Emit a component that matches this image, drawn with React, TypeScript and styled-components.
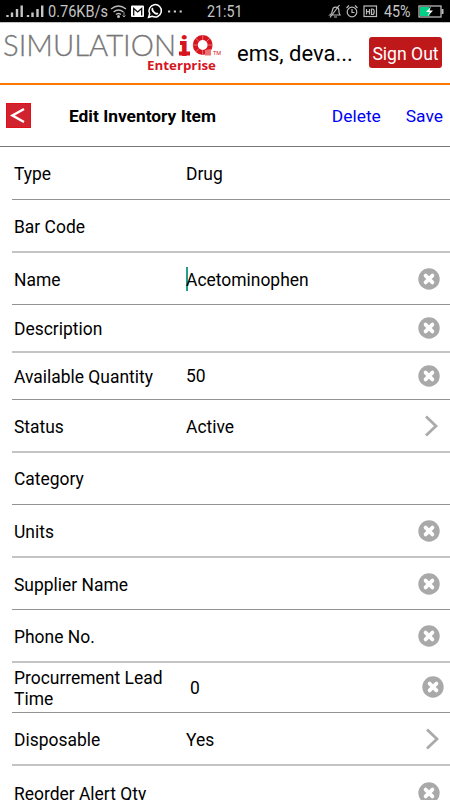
import React from "react";
import styled, { createGlobalStyle } from "styled-components";

const Global = createGlobalStyle`
  * { box-sizing: border-box; }
  html, body { margin: 0; padding: 0; background: #fff; overflow: hidden; }
  body { font-family: Roboto, sans-serif; color: #000; }
`;

const Screen = styled.main`
  width: 450px;
  height: 800px;
  overflow: hidden;
  background: #fff;
`;

const StatusBar = styled.div`
  height: 22px;
  background: #000;
`;

const StatusArt = styled.svg`
  display: block;
  font-family: Roboto, sans-serif;
`;

const BrandBar = styled.header`
  display: flex;
  align-items: center;
  height: 63px;
  padding-right: 8px;
  border-top: 1px solid #c4c4c4;
  border-bottom: 2px solid #ff7800;
`;

const Logo = styled.svg`
  flex: none;
  display: block;
`;

const UserName = styled.div`
  flex: 1;
  margin: 2px 0 0 7px;
  font-size: 22px;
  line-height: 26px;
  white-space: nowrap;
`;

const SignOut = styled.button`
  width: 73px;
  height: 31px;
  margin-bottom: 1px;
  padding: 3px 0 0;
  border: 0;
  border-radius: 3px;
  background: #bf181b;
  color: #fff;
  font: 17.6px/28px Roboto, sans-serif;
  white-space: nowrap;
`;

const TitleBar = styled.div`
  display: flex;
  align-items: center;
  height: 62px;
  padding: 0 7px 0 6px;
  border-bottom: 1px solid #777;
`;

const Back = styled.button`
  display: block;
  width: 25px;
  height: 25px;
  padding: 0;
  border: 1px solid #e11119;
  background: #d0232f;
`;

const Title = styled.h1`
  flex: 1;
  margin: 0 0 0 38px;
  font-size: 17.35px;
  font-weight: 700;
  white-space: nowrap;
`;

const Action = styled.a`
  margin-left: 25px;
  padding-top: 1px;
  color: #0000f5;
  font-size: 17.4px;
`;

const Row = styled.div<{ $height: number; $soft?: boolean; $drop?: number }>`
  display: grid;
  grid-template-columns: 172px 1fr auto;
  align-items: center;
  height: ${(p) => p.$height}px;
  margin-left: 12px;
  padding: ${(p) => p.$drop ?? 2}px 0 0 2px;
  border-bottom: ${(p) => (p.$soft ? "2px solid #c4c4c4" : "1px solid #939393")};
  font-size: 17.45px;
  line-height: 20.5px;
`;

const Label = styled.span`
  padding-top: 1px;
`;

const Value = styled.span<{ $shift?: number }>`
  display: flex;
  align-items: center;
  padding: 1px 0 0 ${(p) => p.$shift ?? 0}px;
`;

const Caret = styled.i`
  width: 2px;
  height: 24px;
  margin: -2px -2px 0 0;
  background: #269e8c;
`;

const Mark = styled.svg<{ $right: number }>`
  display: block;
  margin: -2px ${(p) => p.$right}px 0 0;
`;

function ClearIcon({ right = 10 }: { right?: number }) {
  return (
    <Mark $right={right} width="22" height="22" viewBox="0 0 22 22">
      <circle cx="11" cy="11" r="10.7" fill="#a9a9a9" />
      <path d="M7.6 7.6l6.8 6.8M14.4 7.6l-6.800 6.800" stroke="#fff" strokeWidth="3.8" strokeLinecap="round" />
    </Mark>
  );
}

function ChevronIcon({ right }: { right: number }) {
  return (
    <Mark $right={right} width="14" height="22" viewBox="0 0 14 22" fill="none">
      <path d="M2 1.5l10 9.5L2 20.5" stroke="#aaa" strokeWidth="2.8" />
    </Mark>
  );
}

type Item = {
  label: string;
  value?: string;
  height: number;
  soft?: boolean;
  drop?: number;
  mark?: "clear" | "chevron";
  right?: number;
  caret?: boolean;
  shift?: number;
};

const items: Item[] = [
  { label: "Type", value: "Drug", height: 53 },
  { label: "Bar Code", height: 53, soft: true, drop: 2 },
  { label: "Name", value: "Acetominophen", height: 52, mark: "clear", caret: true, drop: 2 },
  { label: "Description", height: 48, soft: true, mark: "clear", drop: 2 },
  { label: "Available Quantity", value: "50", height: 47, mark: "clear", shift: -1, drop: 1 },
  { label: "Status", value: "Active", height: 53, soft: true, mark: "chevron", right: 12, drop: 2 },
  { label: "Category", height: 52, drop: 1 },
  { label: "Units", height: 53, soft: true, mark: "clear", drop: 2 },
  { label: "Supplier Name", height: 52, mark: "clear", drop: 2 },
  { label: "Phone No.", height: 53, soft: true, mark: "clear", drop: 2 },
  { label: "Procurrement Lead Time", value: "0", height: 50, mark: "clear", right: 6, shift: 4, drop: 1 },
  { label: "Disposable", value: "Yes", height: 53, soft: true, mark: "chevron", right: 11, drop: 2 },
  { label: "Reorder Alert Qty", height: 53, mark: "clear", drop: 3 },
];

function StatusGraphics() {
  return (
    <StatusArt width="450" height="22" viewBox="0 0 450 22" fill="none">
      {[7.5, 28].map((x) => (
        <path
          key={x}
          d={`M${x} 17v-2M${x + 4.5} 17v-4.500M${x + 9.5} 17v-8M${x + 14.2} 17V5.500`}
          stroke="#c5c5c5"
          strokeWidth="2.4"
        />
      ))}
      <text x="48" y="17" fill="#c5c5c5" fontSize="16" textLength="60" lengthAdjust="spacingAndGlyphs">0.76KB/s</text>
      <g stroke="#bbb" strokeWidth="1.4">
        <path d="M111 9q7.500-6 15 0M113.500 12q5-4 10 0M116 14.500q2.500-2 5 0" />
        <circle cx="118.500" cy="16.500" r=".8" fill="#bbb" />
        <path d="M124 12v5M122.500 15.500l1.500 1.500 1.500-1.500" strokeWidth=".8" />
      </g>
      <rect x="131" y="5.500" width="13" height="11.500" rx="1" fill="#fff" />
      <path d="M133.700 15.500V8.500l4 3.500 4-3.500v7" stroke="#111" strokeWidth="1.300" />
      <path d="M148.600 17.300l1.100-3.600a6.200 6.200 0 1 1 2.400 2.500z" stroke="#fff" strokeWidth="1.500" />
      <path d="M152.800 8.200c-1 1-.5 2.500 1 4s3 2 4 1" stroke="#fff" strokeWidth="1.800" />
      <path d="M168 11.500h2.200M173.800 11.500h2.200M179.600 11.500h2.200" stroke="#ccc" strokeWidth="2" />
      <text x="207" y="17" fill="#c5c5c5" fontSize="16" textLength="35.500" lengthAdjust="spacingAndGlyphs">21:51</text>
      <g stroke="#bbb" strokeWidth="1.2">
        <path d="M330 15h10c-1-1.500-1.200-3-1.200-5 0-3.500-5.800-4-6.300 0-.2 2-.3 3.500-2.500 5zM334 17h3M330 17.500L339.500 5" />
        <circle cx="352" cy="12" r="4.800" />
        <path d="M352 9v3.500h2.500M346.500 8l2.500-2.500M355 5.500L357.500 8" />
        <rect x="364" y="6" width="12.500" height="10.500" />
        <path d="M366.500 9v5.500M369.500 9v5.500M366.500 11.700h3M371.500 9v5.500h1c2.200 0 2.200-5.500 0-5.500z" />
      </g>
      <text x="384" y="17" fill="#c5c5c5" fontSize="16" textLength="26.500" lengthAdjust="spacingAndGlyphs">45%</text>
      <rect x="419" y="6" width="22" height="11" stroke="#b9b9b9" strokeWidth="1.300" />
      <rect x="420" y="7" width="9.500" height="9" fill="#00cf88" />
      <path d="M442.500 9v5" stroke="#b9b9b9" strokeWidth="2" />
      <path d="M431 6.500l-5 5.500h3.500l-2 4.500 5.500-6h-3.500z" fill="#fff" />
    </StatusArt>
  );
}

function BrandLogo() {
  return (
    <Logo width="230" height="60" viewBox="0 23 230 60" fill="none">
      <text x="3" y="55.500" fill="#777" stroke="#777" strokeWidth=".3" fontFamily="Lato, sans-serif" fontWeight="300" fontSize="28.800" textLength="173" lengthAdjust="spacingAndGlyphs">SIMULATION</text>
      <text x="180.500" y="55.500" fill="#d6151e" fontFamily="Roboto, sans-serif" fontWeight="900" fontSize="27.500">i</text>
      <path d="M180 43h5M179 53.500h11" stroke="#d6151e" strokeWidth="4" />
      <circle cx="202.700" cy="45" r="7.400" stroke="#d6151e" strokeWidth="5" />
      <path d="M202.700 35v5M192.700 45h5M207.700 45h5M202.700 50v5M195.500 38l3.500 3.500M210 38l-3.500 3.500M195.500 52l3.500-3.500" stroke="#fff" strokeWidth=".4" />
      <path d="M205 50l6-1v6.500h-6z" fill="#ea7277" />
      <text x="213" y="55" fill="#d6151e" fontFamily="Roboto, sans-serif" fontSize="5.500">TM</text>
      <text x="147" y="70" fill="#d6151e" fontFamily="Open Sans, sans-serif" fontWeight="700" fontSize="13" textLength="69" lengthAdjust="spacingAndGlyphs">Enterprise</text>
    </Logo>
  );
}

export default function App() {
  return (
    <Screen>
      <Global />
      <StatusBar><StatusGraphics /></StatusBar>
      <BrandBar>
        <BrandLogo />
        <UserName>ems, deva...</UserName>
        <SignOut>Sign Out</SignOut>
      </BrandBar>
      <TitleBar>
        <Back aria-label="Back">
          <svg width="23" height="23" viewBox="0 0 23 23" fill="none">
            <path d="M17 5L5.500 11.500L17 18" stroke="#fff" strokeWidth="2.500" />
          </svg>
        </Back>
        <Title>Edit Inventory Item</Title>
        <Action>Delete</Action>
        <Action>Save</Action>
      </TitleBar>
      {items.map((it) => (
        <Row key={it.label} $height={it.height} $soft={it.soft} $drop={it.drop}>
          <Label>{it.label}</Label>
          <Value $shift={it.shift}>
            {it.caret && <Caret />}
            {it.value}
          </Value>
          {it.mark === "clear" && <ClearIcon right={it.right} />}
          {it.mark === "chevron" && <ChevronIcon right={it.right ?? 12} />}
        </Row>
      ))}
    </Screen>
  );
}
